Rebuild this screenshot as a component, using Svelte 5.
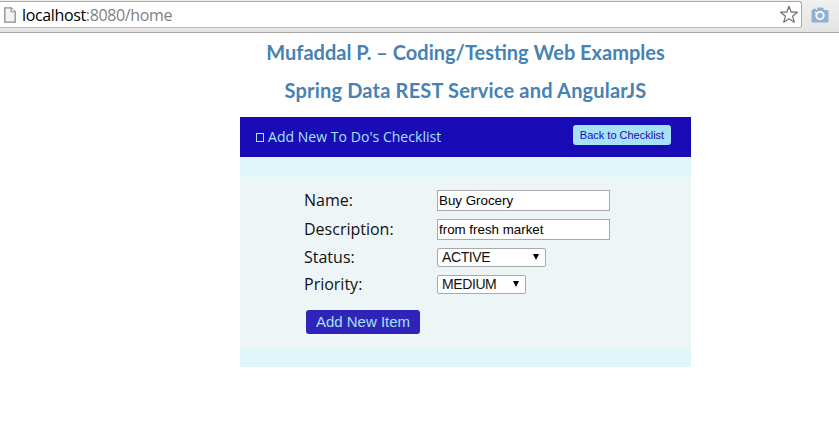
<script>
  let name = $state('Buy Grocery');
  let description = $state('from fresh market');
</script>

<div class="window">
  <header class="toolbar">
    <div class="address">
      <svg class="page" width="12" height="16" viewBox="0 0 12 16">
        <path d="M.8.8h6.4l4 4v10.4H.8z" fill="#f4f4f4" stroke="#8b8b8b" stroke-width="1.3" />
        <path d="M7.2.8v4h4" fill="#fff" stroke="#8b8b8b" stroke-width="1.1" />
      </svg>
      <span class="url">localhost<i>:8080/home</i></span>
      <svg class="star" width="20" height="19" viewBox="0 0 20 19">
        <path d="M10 1.2l2.2 6h6.2l-4.9 4 1.8 6-5.3-3.5-5.3 3.5 1.8-6-4.9-4h6.2z" fill="#fff" stroke="#707070" stroke-width="1.2" stroke-linejoin="round" />
      </svg>
    </div>
    <svg class="camera" width="18" height="16" viewBox="0 0 18 16">
      <path d="M1 3h1V1.8h3V3h.8l.8-2.5h5.5L13 3h3.5q1 0 1 1v10.5q0 1-1 1H1.5q-1 0-1-1V4q0-1 .5-1z" fill="#91b1d4" />
      <circle cx="9" cy="8.5" r="3.7" fill="#91b1d4" stroke="#f4f6f8" stroke-width="2.1" />
      <path d="M4 5l3 1.8" stroke="#f4f6f8" stroke-width="1.2" />
    </svg>
  </header>

  <main>
    <h1>Mufaddal P. – Coding/Testing Web Examples</h1>
    <h1 class="sub">Spring Data REST Service and AngularJS</h1>

    <section class="panel">
      <div class="head">
        <span class="glyph"></span>
        <span class="title">Add New To Do's Checklist</span>
        <button class="back">Back to Checklist</button>
      </div>
      <form>
        <div class="row r1"><label for="name">Name:</label><input id="name" bind:value={name} /></div>
        <div class="row r2"><label for="desc">Description:</label><input id="desc" bind:value={description} /></div>
        <div class="row r3">
          <span class="label">Status:</span>
          <div class="select status"><span>ACTIVE</span><svg width="6" height="6"><path d="M0 0h6L3 6z" /></svg></div>
        </div>
        <div class="row r4">
          <span class="label">Priority:</span>
          <div class="select priority"><span>MEDIUM</span><svg width="6" height="6"><path d="M0 0h6L3 6z" /></svg></div>
        </div>
        <button class="add" type="button">Add New Item</button>
      </form>
    </section>
  </main>
</div>

<style>
  :global(body) { background: #fff; }
  .window { width: 839px; height: 424px; overflow: hidden; }
  .window * { box-sizing: border-box; }
  .toolbar {
    height: 33px; padding-top: 1px; display: flex; align-items: flex-start;
    background: linear-gradient(#f0f0f0, #e4e4e4); border-bottom: 1px solid #a5a5a5;
  }
  .address {
    width: 802px; height: 27px; display: flex; align-items: center; padding: 0 2px 0 4px;
    background: #fff; border: 1px solid #a9a9a9; border-bottom-color: #bdbdbd; border-left: 0; border-radius: 0 3px 3px 0;
  }
  .page { flex: none; margin-right: 6px; }
  .url { flex: 1; font: 16px/22px "Open Sans", sans-serif; color: #000; white-space: nowrap; letter-spacing: -0.36px; }
  .url i { font-style: normal; color: #808080; }
  .star { flex: none; }
  .camera { margin: 6px 0 0 9px; }

  main { display: flex; flex-direction: column; align-items: center; width: 451px; margin-left: 240px; }
  h1 { margin: 0; height: 38px; font: 700 20px/38px Lato, sans-serif; color: #4682b4; white-space: nowrap; }
  .sub { letter-spacing: 0.19px; }

  .panel { width: 451px; height: 250px; margin-top: 8px; background: #dff7f9; }
  .head { height: 40px; display: flex; align-items: center; padding: 0 20px 0 16px; background: #190cb6; color: #a6e1f5; }
  .glyph { width: 8px; height: 9px; border: 1px solid #a6e1f5; margin: 1px 4px 0 0; }
  .title { flex: 1; font: 14px/20px "Open Sans", sans-serif; letter-spacing: 0.04px; white-space: nowrap; }
  button { border: 0; padding: 0; display: block; white-space: nowrap; font-family: "Liberation Sans", Arial, sans-serif; }
  .back { width: 98px; height: 20px; margin-bottom: 4px; border-radius: 3px; background: #a6e1f5; color: #190cb6; font-size: 11px; }

  form { height: 170px; margin-top: 20px; padding: 13px 0 0 64px; background: #edf5f7; }
  .panel { display: flow-root; }
  .row { display: flex; align-items: center; }
  .r1 { height: 21px; }
  .r2 { height: 21px; margin-top: 8px; }
  .r3 { height: 19px; margin-top: 8px; }
  .r4 { height: 19px; margin-top: 8px; }
  label, .label { width: 133px; font: 16px/19px "Open Sans", sans-serif; color: #111; }
  input { width: 173px; height: 21px; padding: 0 1px; border: 1px solid #a9a9a9; background: #fff; color: #000; font: 13.33px "Liberation Sans", Arial, sans-serif; outline: 0; }
  .select { height: 19px; display: flex; align-items: center; justify-content: space-between; padding: 0 6px 0 4px; border: 1px solid #a9a9a9; border-radius: 2px; background: #fff; color: #111; font: 14px/17px "Liberation Sans", Arial, sans-serif; letter-spacing: -0.4px; }
  .select svg { margin-bottom: 1px; }
  .status { width: 109px; }
  .priority { width: 89px; }
  .add { width: 114px; height: 24px; margin: 16px 0 0 2px; padding-bottom: 2px; border-radius: 3px; background: #3023ba; color: #a6e1f5; font-size: 15px; }
</style>
